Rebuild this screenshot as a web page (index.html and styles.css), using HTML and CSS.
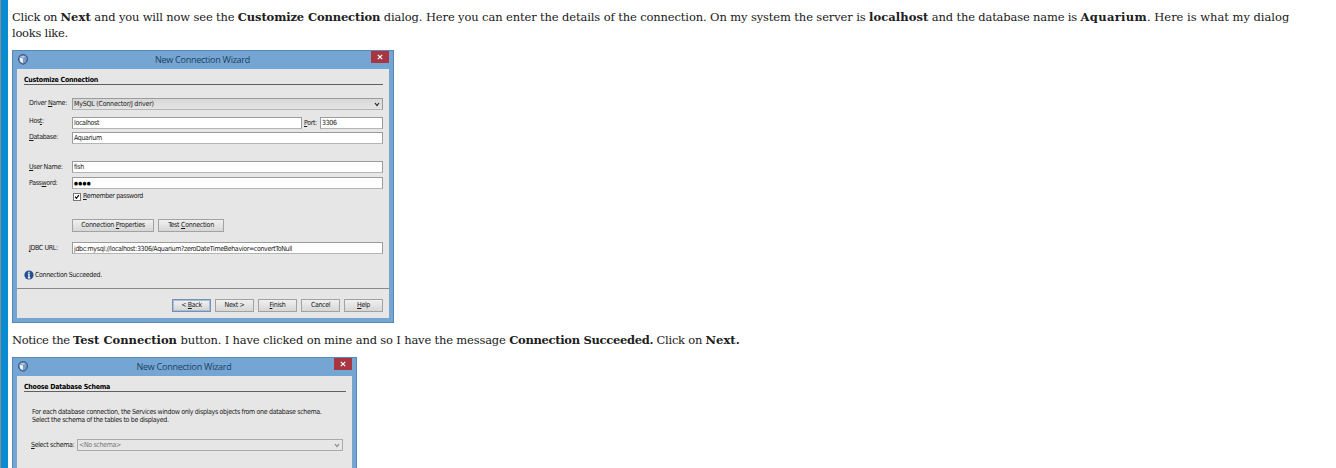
FILE: index.html
```
<!DOCTYPE html>
<html lang="en">
<head>
<meta charset="utf-8">
<title>Customize Connection</title>
<link rel="stylesheet" href="styles.css">
</head>
<body>
<main class="article">
<p class="copy"><span class="r1">Click on </span><b class="r2">Next</b><span class="r3"> and you will now see the </span><b class="r4">Customize Connection</b><span class="r5"> dialog. Here you can enter the details of the connection. On my system the server is </span><b class="r6">localhost</b><span class="r7"> and the database name is </span><b class="r8">Aquarium</b><span class="r9">. Here is what my dialog</span><br><span class="r10">looks like.</span></p>
<section class="dialog first">
  <header class="titlebar">
    <svg class="cube" viewBox="0 0 10 11"><path d="M5 .7C8 .7 9.4 2.2 9.4 5S7.8 9.7 5 10.2C2.2 9.7.6 7.8.6 5S2 .7 5 .7Z" fill="#6d93bd" stroke="#344f83"/><path d="M1.7 3.4 4.9 4.5V9.2L2.2 7.5Z" fill="#f0f6fc"/><path d="M5 4.5 8.3 3.4 7.8 7.5 5 9Z" fill="#7f9cc2"/><path d="M2.2 2.8 5 1.7 7.8 2.8 5 4Z" fill="#b9cbe0"/></svg>
    <h2 class="title">New Connection Wizard</h2>
    <span class="close"><svg viewBox="0 0 6 6"><path d="M.8.8 5.2 5.2M5.2.8.8 5.2"/></svg></span>
  </header>
  <div class="panel">
    <h3 class="heading">Customize Connection</h3>
    <div class="row driver"><label>Driver <u>N</u>ame:</label><div class="combo"><span class="v-driver">MySQL (Connector/J driver)</span><svg class="arrow" viewBox="0 0 6 5"><path d="M1 1 3 3.6 5 1"/></svg></div></div>
    <div class="row host"><label>Hos<u>t</u>:</label><div class="field"><span>localhost</span></div><span class="port-label"><u>P</u>ort:</span><div class="field port"><span>3306</span></div></div>
    <div class="row database"><label><u>D</u>atabase:</label><div class="field"><span>Aquarium</span></div></div>
    <div class="row user"><label><u>U</u>ser Name:</label><div class="field"><span>fish</span></div></div>
    <div class="row password"><label>Pass<u>w</u>ord:</label><div class="field"><span class="dots">●●●●</span></div></div>
    <div class="remember"><span class="check"><svg viewBox="0 0 8 8"><path d="M1.5 3.5 3.2 5.7 6.5 1.5"/></svg></span><span><u>R</u>emember password</span></div>
    <div class="actions"><span class="button props">Connection <u>P</u>roperties</span><span class="button test">Test <u>C</u>onnection</span></div>
    <div class="row jdbc"><label><u>J</u>DBC URL:</label><div class="field"><span>jdbc:mysql://localhost:3306/Aquarium?zeroDateTimeBehavior=convertToNull</span></div></div>
    <div class="status"><svg viewBox="0 0 10 10"><circle cx="5" cy="5" r="4.6" fill="#264f91"/><path d="M5 1.7V3M3.9 4.2H5V7.8M3.8 7.9H6.3" stroke="#fff" stroke-width="1.3" fill="none"/></svg><span>Connection Succeeded.</span></div>
    <footer class="footer"><span class="button focus">&lt; <u>B</u>ack</span><span class="button">Next &gt;</span><span class="button"><u>F</u>inish</span><span class="button">Cancel</span><span class="button"><u>H</u>elp</span></footer>
  </div>
</section>
<p class="copy second-copy"><span class="s1">Notice the </span><b class="s2">Test Connection</b><span class="s3"> button. I have clicked on mine and so I have the message </span><b class="s4">Connection Succeeded.</b><span class="s5"> Click on </span><b class="s6">Next.</b></p>
<section class="dialog second">
  <header class="titlebar">
    <svg class="cube" viewBox="0 0 10 11"><path d="M5 .7C8 .7 9.4 2.2 9.4 5S7.8 9.7 5 10.2C2.2 9.7.6 7.8.6 5S2 .7 5 .7Z" fill="#6d93bd" stroke="#344f83"/><path d="M1.7 3.4 4.9 4.5V9.2L2.2 7.5Z" fill="#f0f6fc"/><path d="M5 4.5 8.3 3.4 7.8 7.5 5 9Z" fill="#7f9cc2"/><path d="M2.2 2.8 5 1.7 7.8 2.8 5 4Z" fill="#b9cbe0"/></svg>
    <h2 class="title">New Connection Wizard</h2>
    <span class="close"><svg viewBox="0 0 6 6"><path d="M.8.8 5.2 5.2M5.2.8.8 5.2"/></svg></span>
  </header>
  <div class="panel">
    <h3 class="heading">Choose Database Schema</h3>
    <p class="note">For each database connection, the Services window only displays objects from one database schema.<br>Select the schema of the tables to be displayed.</p>
    <div class="schema"><label><u>S</u>elect schema:</label><div class="combo disabled"><span>&lt;No schema&gt;</span><svg class="arrow" viewBox="0 0 6 5"><path d="M1 1 3 3.6 5 1"/></svg></div></div>
  </div>
</section>
</main>
</body>
</html>
```
FILE: styles.css
```
* { box-sizing: border-box; }
body { margin: 0; background: #fff; overflow: hidden; }
.article { height: 468px; overflow: hidden; border-left: 1px solid #8c8c8c; box-shadow: inset 7px 0 #078bd3; padding: 9px 0 0 11px; }
.copy { margin: 0; height: 41px; font: 11.5px/16px "DejaVu Serif", serif; color: #202020; white-space: pre; }
.second-copy { height: 34px; padding-top: 9px; }
.r1 { letter-spacing: -.3px; }
.r2, .r6, .s6 { letter-spacing: .07px; }
.r3, .r7, .s3 { letter-spacing: -.17px; }
.r4 { letter-spacing: -.13px; }
.r5 { letter-spacing: -.12px; }
.r8 { letter-spacing: .35px; }
.r9 { letter-spacing: -.02px; }
.r10, .s5 { letter-spacing: -.26px; }
.s4 { letter-spacing: -.3px; }
.s1 { letter-spacing: -.33px; }
.dialog { width: 382px; height: 273px; background: #74a5d3; border: 1px solid #5688b8; padding: 0 4px 4px; font: 7px/9px "DejaVu Sans Condensed", "DejaVu Sans", sans-serif; letter-spacing: -.35px; color: #191919; white-space: nowrap; }
.second { width: 345px; height: 150px; }
.titlebar { display: flex; height: 18px; align-items: flex-start; }
.cube { width: 10px; height: 11px; margin: 3px 0 0 1px; }
.title { flex: 1; margin: 2px 0 0 6px; text-align: center; font: 9px/13px "Open Sans", sans-serif; letter-spacing: -.25px; color: #203f60; }
.close { width: 18px; height: 12px; background: #aa3542; display: flex; align-items: center; justify-content: center; }
.close svg { width: 6px; height: 6px; fill: none; stroke: #fff; stroke-width: 1.2; }
.panel { height: 249px; background: #e6e6e6; padding: 6px 6px 0 7px; }
.second .panel { height: 130px; }
.heading { margin: 0; height: 10px; border-bottom: 1px solid #606060; font: bold 7px/11px "DejaVu Sans Condensed", sans-serif; letter-spacing: -.25px; color: #000; }
.row { display: flex; height: 12px; line-height: 10px; }
.row label { width: 48px; padding-left: 5px; }
u { text-decoration-thickness: 1px; text-underline-offset: 1px; }
.field, .combo { flex: 1; background: #fff; border: 1px solid #9b9b9b; border-bottom-color: #b5b5b5; padding-left: 1px; line-height: 11px; }
.combo { display: flex; justify-content: space-between; align-items: center; padding-right: 2px; background: linear-gradient(#d8d8d8, #e4e4e4); }
.arrow { width: 6px; height: 5px; fill: none; stroke: #222; stroke-width: 1.2; }
.driver { margin-top: 13px; }
.v-driver { letter-spacing: -.22px; }
.host { margin-top: 7px; }
.host label { line-height: 9px; }
.row .port { flex: none; width: 63px; }
.port-label { width: 18px; padding-left: 2px; line-height: 13px; }
.database { margin-top: 3px; }
.user { margin-top: 17px; }
.password { margin-top: 4px; }
.user label, .password label, .jdbc label { line-height: 13px; }
.jdbc .field { line-height: 12px; }
.dots { display: block; font-size: 5px; line-height: 10px; letter-spacing: .3px; color: #000; }
.remember { display: flex; gap: 2px; align-items: center; margin: 3px 0 0 49px; height: 9px; letter-spacing: -.38px; }
.check { width: 8px; height: 8px; border: 1px solid #777; background: #fff; display: flex; }
.check svg { width: 6px; height: 6px; fill: none; stroke: #000; stroke-width: 1.5; }
.actions { display: flex; gap: 4px; height: 13px; margin: 18px 0 0 48px; letter-spacing: -.28px; }
.button { width: 39px; height: 13px; background: linear-gradient(#f0f0f0, #d6d6d6); border: 1px solid #a2a2a2; line-height: 11px; text-align: center; }
.props { width: 82px; }
.test { width: 66px; }
.jdbc { margin-top: 10px; }
.status { display: flex; gap: 1px; align-items: center; margin-top: 16px; height: 10px; }
.status svg { width: 10px; height: 10px; }
.footer { display: flex; gap: 4px; justify-content: flex-end; border-top: 1px solid #8a8a8a; margin: 8px -6px 0 -7px; padding: 10px 6px 0 0; }
.focus { border: 2px solid #a5bedc; outline: 1px solid #7890b0; outline-offset: -1px; line-height: 9px; }
.note { margin: 16px 0 0 8px; line-height: 8px; letter-spacing: -.33px; }
.schema { display: flex; height: 12px; margin: 15px 3px 0 7px; line-height: 12px; }
.schema label { width: 46px; }
.disabled { color: #777; background: #e6e6e6; border-color: #aaa; }
.disabled .arrow { stroke: #888; }
```
